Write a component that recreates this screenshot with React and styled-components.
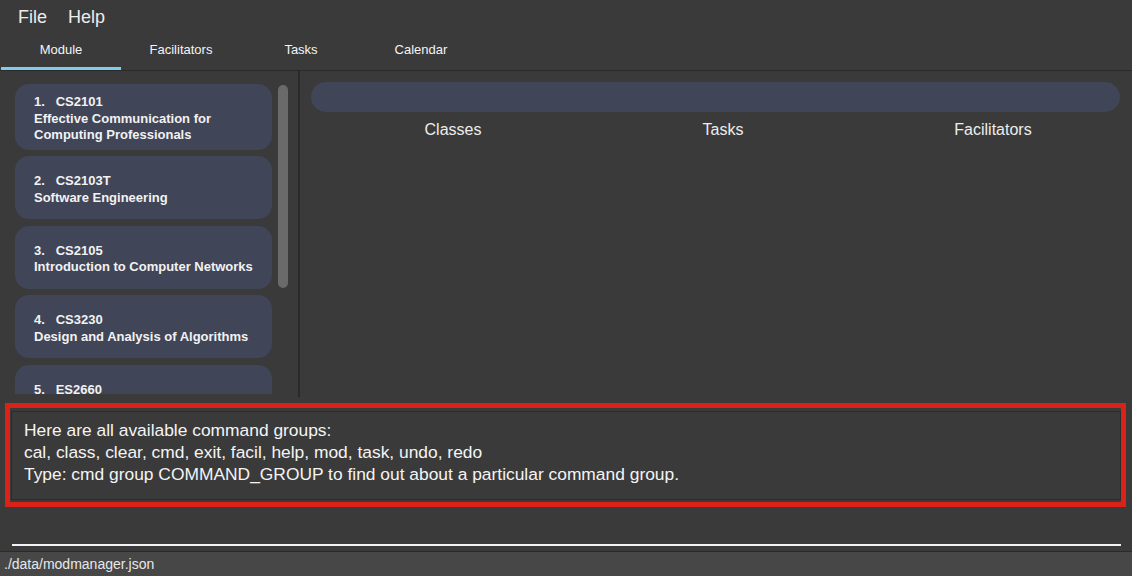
import React from 'react';
import styled, { createGlobalStyle } from 'styled-components';

const GlobalStyle = createGlobalStyle`
  html, body {
    margin: 0;
    padding: 0;
    background: #3a3a3a;
  }
  body {
    font-family: 'Liberation Sans', Arial, sans-serif;
    color: #f0f0f0;
  }
`;

const Window = styled.div`
  width: 1132px;
  height: 576px;
  display: flex;
  flex-direction: column;
  background: #3a3a3a;
  overflow: hidden;
`;

const MenuBar = styled.div`
  height: 34px;
  display: flex;
  align-items: center;
  gap: 21px;
  padding: 0 0 0 18px;
  box-sizing: border-box;
`;

const MenuItem = styled.span`
  font-size: 18px;
  color: #ececec;
`;

const TabHeader = styled.div`
  height: 37px;
  display: flex;
  padding-left: 1px;
  border-bottom: 1px solid #2a2a2a;
  box-sizing: border-box;
`;

const Tab = styled.div`
  width: 120px;
  display: flex;
  align-items: center;
  justify-content: center;
  font-size: 13px;
  color: #f4f4f4;
  padding-bottom: 2px;
  box-sizing: border-box;
  border-bottom: 3px solid ${p => (p.active ? '#7fcdee' : 'transparent')};
`;

const Main = styled.div`
  height: 326px;
  display: flex;
`;

const LeftPane = styled.div`
  width: 300px;
  border-right: 2px solid #2a2a2a;
  display: flex;
  padding: 13px 0 3px 15px;
  box-sizing: border-box;
  gap: 6px;
`;

const ListView = styled.div`
  width: 257px;
  display: flex;
  flex-direction: column;
  gap: 6.5px;
  overflow: hidden;
`;

const Card = styled.div`
  flex-shrink: 0;
  min-height: 63px;
  background: #414558;
  border-radius: 14px;
  padding: 10px 19px 6px;
  box-sizing: border-box;
  display: flex;
  flex-direction: column;
  justify-content: center;
  font-size: 13px;
  font-weight: bold;
  line-height: 16.5px;
  color: #f2f2f2;
`;

const CardLine = styled.div`
  white-space: pre;
`;

const ScrollTrack = styled.div`
  width: 10px;
  padding-top: 1px;
`;

const ScrollThumb = styled.div`
  height: 203px;
  width: 10px;
  border-radius: 5px;
  background: #6a6a6a;
`;

const RightPane = styled.div`
  flex: 1;
  padding: 11px 12px 0 11px;
  display: flex;
  flex-direction: column;
`;

const TitlePill = styled.div`
  height: 30px;
  border-radius: 15px;
  background: #414558;
`;

const Columns = styled.div`
  display: grid;
  grid-template-columns: repeat(3, 1fr);
  margin: 9px -8px 0 7px;
`;

const ColumnLabel = styled.div`
  text-align: center;
  font-size: 16px;
  color: #ededed;
`;

const ResultFrame = styled.div`
  margin: 6px 6px 0 5px;
  border: 5px solid #dc2118;
  padding: 3px 0 2px 1px;
`;

const ResultBox = styled.div`
  height: 89px;
  border: 1px solid #2b2b2b;
  box-sizing: border-box;
  padding: 7px 12px;
  font-size: 17.4px;
  line-height: 22px;
  color: #f4f4f4;
`;

const CommandArea = styled.div`
  flex: 1;
  padding: 0 11px 5px 12px;
  display: flex;
  align-items: flex-end;
`;

const CommandLine = styled.div`
  width: 100%;
  height: 2px;
  background: #f2f2f2;
`;

const StatusBar = styled.div`
  height: 24px;
  border-top: 1px solid #2a2a2a;
  background: #474747;
  font-size: 14px;
  color: #e8e8e8;
  display: flex;
  align-items: center;
  padding-left: 4px;
`;

const modules = [
  ['1.   CS2101', 'Effective Communication for', 'Computing Professionals'],
  ['2.   CS2103T', 'Software Engineering'],
  ['3.   CS2105', 'Introduction to Computer Networks'],
  ['4.   CS3230', 'Design and Analysis of Algorithms'],
  ['5.   ES2660', 'Communicating in the Information Age'],
];

export default function App() {
  return (
    <Window>
      <GlobalStyle />
      <MenuBar>
        <MenuItem>File</MenuItem>
        <MenuItem>Help</MenuItem>
      </MenuBar>
      <TabHeader>
        <Tab active>Module</Tab>
        <Tab>Facilitators</Tab>
        <Tab>Tasks</Tab>
        <Tab>Calendar</Tab>
      </TabHeader>
      <Main>
        <LeftPane>
          <ListView>
            {modules.map(lines => (
              <Card key={lines[0]}>
                {lines.map(l => (
                  <CardLine key={l}>{l}</CardLine>
                ))}
              </Card>
            ))}
          </ListView>
          <ScrollTrack>
            <ScrollThumb />
          </ScrollTrack>
        </LeftPane>
        <RightPane>
          <TitlePill />
          <Columns>
            <ColumnLabel>Classes</ColumnLabel>
            <ColumnLabel>Tasks</ColumnLabel>
            <ColumnLabel>Facilitators</ColumnLabel>
          </Columns>
        </RightPane>
      </Main>
      <ResultFrame>
        <ResultBox>
          <div>Here are all available command groups:</div>
          <div>cal, class, clear, cmd, exit, facil, help, mod, task, undo, redo</div>
          <div>Type: cmd group COMMAND_GROUP to find out about a particular command group.</div>
        </ResultBox>
      </ResultFrame>
      <CommandArea>
        <CommandLine />
      </CommandArea>
      <StatusBar>./data/modmanager.json</StatusBar>
    </Window>
  );
}
